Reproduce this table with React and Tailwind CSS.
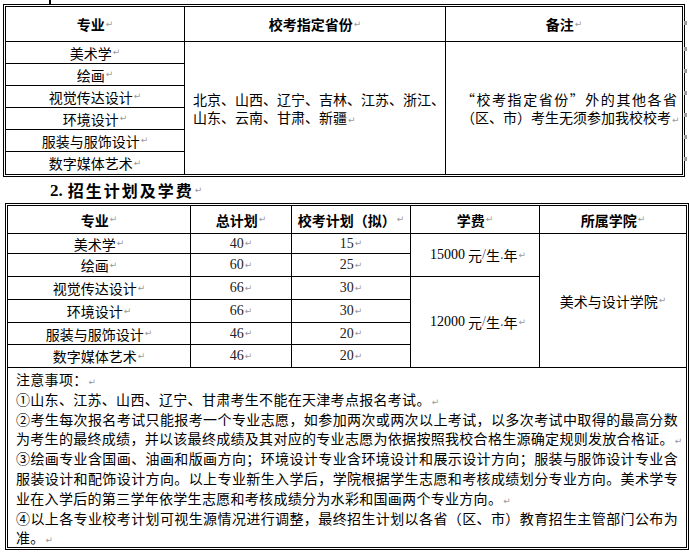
import React from "react";

const Mark = () => (
  <span className="ml-[1px] text-[9px] leading-none text-[#9a9a9a] font-['DejaVu_Sans',sans-serif] font-normal">↵</span>
);

const Cell = ({ children, className = "" }) => (
  <div className={"flex items-center justify-center border-black " + className}>{children}</div>
);

const Dot = ({ top }) => (
  <div className="absolute right-[-5px] h-[4px] w-[3px] bg-[#9c9c9c]" style={{ top }} />
);

export default function App() {
  const majors = ["美术学", "绘画", "视觉传达设计", "环境设计", "服装与服饰设计", "数字媒体艺术"];
  const totals = ["40", "60", "66", "66", "46", "46"];
  const school = ["15", "25", "30", "30", "20", "20"];

  return (
    <div className="w-[689px] h-[552px] overflow-hidden bg-white text-black text-[14px] font-['Noto_Sans_CJK_SC',sans-serif]">
      {/* clipped previous line */}
      <div className="relative h-[4px] overflow-hidden">
        <div className="absolute left-[49px] top-0 h-[4px] w-[2px] bg-black" />
        <div className="absolute left-[68px] top-[-17px] whitespace-nowrap text-[15px] leading-[18px] font-bold text-[#444]">
          （1）校考指定省份与专业
        </div>
      </div>

      {/* Table 1 */}
      <div className="relative ml-[3px] w-[682px] border-[3px] border-double border-black">
        <Dot top="14px" />
        <Dot top="40px" />
        <Dot top="62px" />
        <Dot top="84px" />
        <Dot top="106px" />
        <Dot top="128px" />
        <Dot top="150px" />
        <div className="grid grid-cols-[179px_261px_236px] grid-rows-[35px_repeat(6,22px)] leading-[18px]">
          <Cell className="border-b border-r font-bold">专业<Mark /></Cell>
          <Cell className="border-b border-r font-bold">校考指定省份<Mark /></Cell>
          <Cell className="border-b font-bold">备注<Mark /></Cell>

          <Cell className="border-b border-r">美术学<Mark /></Cell>
          <div className="row-span-6 flex flex-col justify-center border-r border-black pl-[8px]">
            <div>北京、山西、辽宁、吉林、江苏、浙江、</div>
            <div>山东、云南、甘肃、新疆<Mark /></div>
          </div>
          <div className="row-span-6 flex flex-col justify-center pl-[15px] pr-[5px]">
            <div className="text-justify [text-align-last:justify]">“校考指定省份”外的其他各省</div>
            <div className="whitespace-nowrap">（区、市）考生无须参加我校校考<Mark /></div>
          </div>

          {majors.slice(1).map((m, i) => (
            <Cell key={m} className={i < 4 ? "border-b border-r" : "border-r"}>
              {m}
              <Mark />
            </Cell>
          ))}
        </div>
      </div>

      {/* Heading */}
      <div className="flex h-[26px] items-center pl-[50px] text-[16px] font-bold leading-none">
        <span className="font-['Liberation_Serif',serif] text-[17px]">2.</span>
        <span className="ml-[5px] tracking-[2px]">招生计划及学费</span>
        <Mark />
      </div>

      {/* Table 2 */}
      <div className="ml-[5px] w-[684px] border-[3px] border-double border-black">
        <div className="grid grid-cols-[183px_101px_119px_129px_146px] grid-rows-[28px_20px_23px_23px_23px_22px_23px_179px] leading-[18px]">
          <Cell className="border-b border-r font-bold">专业<Mark /></Cell>
          <Cell className="border-b border-r font-bold">总计划<Mark /></Cell>
          <Cell className="border-b border-r font-bold">校考计划（拟）<Mark /></Cell>
          <Cell className="border-b border-r font-bold">学费<Mark /></Cell>
          <Cell className="border-b font-bold">所属学院<Mark /></Cell>

          {majors.map((m, i) => (
            <React.Fragment key={m}>
              <Cell className="border-b border-r">{m}<Mark /></Cell>
              <Cell className="border-b border-r font-['Liberation_Serif',serif] text-[#222]">{totals[i]}<Mark /></Cell>
              <Cell className="border-b border-r font-['Liberation_Serif',serif] text-[#222]">{school[i]}<Mark /></Cell>
              {i === 0 && (
                <Cell className="row-span-2 border-b border-r pl-[6px]">
                  <span className="font-['Liberation_Serif',serif]">15000</span>
                  <span className="ml-[3px]">元</span>
                  <span className="font-['Liberation_Serif',serif] text-[#4a4a8a]">/</span>
                  <span>生</span>
                  <span className="font-['Liberation_Serif',serif] text-[#4a4a8a]">.</span>
                  <span>年</span>
                  <Mark />
                </Cell>
              )}
              {i === 0 && (
                <Cell className="row-span-6 border-b">美术与设计学院<Mark /></Cell>
              )}
              {i === 2 && (
                <Cell className="row-span-4 border-b border-r pl-[6px]">
                  <span className="font-['Liberation_Serif',serif]">12000</span>
                  <span className="ml-[3px]">元</span>
                  <span className="font-['Liberation_Serif',serif] text-[#4a4a8a]">/</span>
                  <span>生</span>
                  <span className="font-['Liberation_Serif',serif] text-[#4a4a8a]">.</span>
                  <span>年</span>
                  <Mark />
                </Cell>
              )}
            </React.Fragment>
          ))}

          <div className="col-span-5 pl-[8px] pr-[8px] pt-[2px] text-[14px] leading-[19.8px] tracking-[0.3px]">
            <div>注意事项：<Mark /></div>
            <div>①山东、江苏、山西、辽宁、甘肃考生不能在天津考点报名考试。<Mark /></div>
            <div className="whitespace-nowrap text-justify [text-align-last:justify]">②考生每次报名考试只能报考一个专业志愿，如参加两次或两次以上考试，以多次考试中取得的最高分数</div>
            <div className="whitespace-nowrap">为考生的最终成绩，并以该最终成绩及其对应的专业志愿为依据按照我校合格生源确定规则发放合格证。<Mark /></div>
            <div className="whitespace-nowrap text-justify [text-align-last:justify]">③绘画专业含国画、油画和版画方向；环境设计专业含环境设计和展示设计方向；服装与服饰设计专业含</div>
            <div className="whitespace-nowrap text-justify [text-align-last:justify]">服装设计和配饰设计方向。以上专业新生入学后，学院根据学生志愿和考核成绩划分专业方向。美术学专</div>
            <div>业在入学后的第三学年依学生志愿和考核成绩分为水彩和国画两个专业方向。<Mark /></div>
            <div className="whitespace-nowrap text-justify [text-align-last:justify]">④以上各专业校考计划可视生源情况进行调整，最终招生计划以各省（区、市）教育招生主管部门公布为</div>
            <div>准。<Mark /></div>
          </div>
        </div>
      </div>
    </div>
  );
}
